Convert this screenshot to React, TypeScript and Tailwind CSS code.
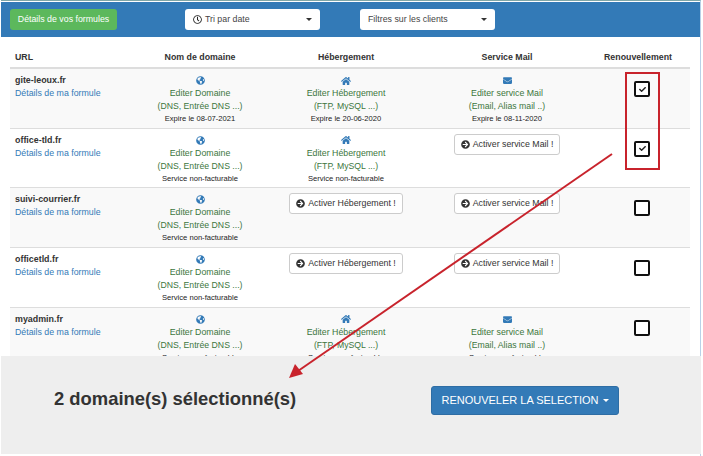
import React from 'react';
import { FaArrowCircleRight, FaEnvelope, FaGlobeAmericas, FaHome, FaRegClock, FaCheck } from 'react-icons/fa';

type Service = { kind: 'edit'; note: string } | { kind: 'activate' };

const svc = (note: string): Service => ({ kind: 'edit', note });
const off: Service = { kind: 'activate' };
const NF = 'Service non-facturable';

const ROWS = [
  { url: 'gite-leoux.fr', domain: 'Expire le 08-07-2021', host: svc('Expire le 20-06-2020'), mail: svc('Expire le 08-11-2020'), checked: true },
  { url: 'office-tld.fr', domain: NF, host: svc(NF), mail: off, checked: true },
  { url: 'suivi-courrier.fr', domain: NF, host: off, mail: off, checked: false },
  { url: 'officetld.fr', domain: NF, host: off, mail: off, checked: false },
  { url: 'myadmin.fr', domain: NF, host: svc(NF), mail: svc(NF), checked: false },
];

const COLS = 'grid grid-cols-[118px_144px_148px_174px_96px]';

function Caret() {
  return <span className="block w-0 h-0 border-x-[3px] border-x-transparent border-t-[3px] border-t-current" />;
}

function Dropdown({ label, icon }: { label: string; icon?: boolean }) {
  return (
    <div className="w-[135px] h-[21px] bg-white rounded-[3px] flex items-center pl-2 pr-[8px] text-[8.8px] text-[#444]">
      {icon && <FaRegClock className="mr-[3px] text-[#222]" size={9} />}
      <span>{label}</span>
      <span className="ml-auto flex text-[#333]"><Caret /></span>
    </div>
  );
}

function EditCell({ icon, title, detail, note }: { icon: React.ReactNode; title: string; detail: string; note: string }) {
  return (
    <div className="flex flex-col items-center text-center">
      <div className="h-[13px] flex items-center text-[#337ab7]">{icon}</div>
      <div className="h-[13px] leading-[13px] text-[#3c763d] text-[8.8px]">{title}</div>
      <div className="h-[13px] leading-[13px] text-[#3c763d] text-[8.7px]">{detail}</div>
      <div className="h-[11px] leading-[11px] text-[#222] text-[7.6px]">{note}</div>
    </div>
  );
}

function ActivateButton({ label }: { label: string }) {
  return (
    <div className="flex justify-center">
      <div className="h-[21px] px-[6px] bg-white border border-[#ccc] rounded-[3px] flex items-center gap-[3px] text-[8.8px] text-[#333]">
        <FaArrowCircleRight size={9} className="text-[#333]" />
        {label}
      </div>
    </div>
  );
}

function Checkbox({ checked }: { checked: boolean }) {
  return (
    <div className="w-4 h-4 border-2 border-[#111] rounded-[2px] bg-white flex items-center justify-center mt-[7px]">
      {checked && <FaCheck size={7} className="text-[#222]" />}
    </div>
  );
}

export default function App() {
  return (
    <div className="relative w-[703px] h-[456px] overflow-hidden bg-white font-['Liberation_Sans',Arial,sans-serif]">
      <div className="ml-px w-[700px] h-[456px] pt-[1px] border-r-[1px] border-r-[#b9d1e8] border-t border-t-[#7fa6a8]">
        <div className="h-[35px] bg-[#337ab7] flex items-center pl-[9px]">
          <div className="w-[107px] h-[21px] bg-[#5cb85c] rounded-[3px] text-white text-[8.8px] flex items-center justify-center">
            Détails de vos formules
          </div>
          <div className="ml-[68px]"><Dropdown label="Tri par date" icon /></div>
          <div className="ml-[40px]"><Dropdown label="Filtres sur les clients" /></div>
        </div>

        <div className="ml-[9px] w-[680px] text-[8.8px] text-[#333]">
          <div className={`${COLS} h-[32px] items-end pb-[4px] border-b-2 border-[#ddd] font-bold text-[8.8px] leading-[11px]`}>
            <div className="pl-[5px]">URL</div>
            <div className="text-center">Nom de domaine</div>
            <div className="text-center">Hébergement</div>
            <div className="text-center">Service Mail</div>
            <div className="text-center pr-2">Renouvellement</div>
          </div>
          {ROWS.map((row, i) => (
            <div key={row.url} className={`${COLS} h-[59.7px] pt-[5px] border-b border-[#ddd] ${i % 2 === 0 ? 'bg-[#f9f9f9]' : 'bg-white'}`}>
              <div className="pl-[5px]">
                <div className="h-[13px] leading-[13px] font-bold text-[8.9px] text-[#333]">{row.url}</div>
                <div className="h-[13px] leading-[13px] text-[#337ab7] text-[8.8px]">Détails de ma formule</div>
              </div>
              <EditCell icon={<FaGlobeAmericas size={9} />} title="Editer Domaine" detail="(DNS, Entrée DNS ...)" note={row.domain} />
              {row.host.kind === 'edit' ? (
                <EditCell icon={<FaHome size={10} />} title="Editer Hébergement" detail="(FTP, MySQL ...)" note={row.host.note} />
              ) : (
                <ActivateButton label="Activer Hébergement !" />
              )}
              {row.mail.kind === 'edit' ? (
                <EditCell icon={<FaEnvelope size={9} />} title="Editer service Mail" detail="(Email, Alias mail ..)" note={row.mail.note} />
              ) : (
                <ActivateButton label="Activer service Mail !" />
              )}
              <div className="flex justify-center"><Checkbox checked={row.checked} /></div>
            </div>
          ))}
        </div>
      </div>

      {/* barre de selection fixee en bas */}
      <div className="absolute left-px top-[356px] w-[700px] h-[98px] bg-[#eeeeee] flex items-center pl-[53px]">
        <div className="w-[377px] font-bold text-[18.4px] text-[#333] mt-[-12px]">2 domaine(s) sélectionné(s)</div>
        <div className="w-[188px] h-[29px] mt-[-10px] bg-[#337ab7] border border-[#2e6da4] rounded-[3px] text-white text-[11px] flex items-center justify-center gap-[4px]">
          RENOUVELER LA SELECTION
          <Caret />
        </div>
      </div>

      {/* annotations */}
      <div className="absolute left-[625px] top-[72px] w-[35px] h-[98px] border-2 border-[#c8232c]" />
      <svg className="absolute left-0 top-0" width="703" height="456" viewBox="0 0 703 456">
        <line x1="612" y1="154" x2="298" y2="371" stroke="#c8232c" strokeWidth="2" />
        <polygon points="289,378 295,364 303,374" fill="#c8232c" />
      </svg>
    </div>
  );
}
